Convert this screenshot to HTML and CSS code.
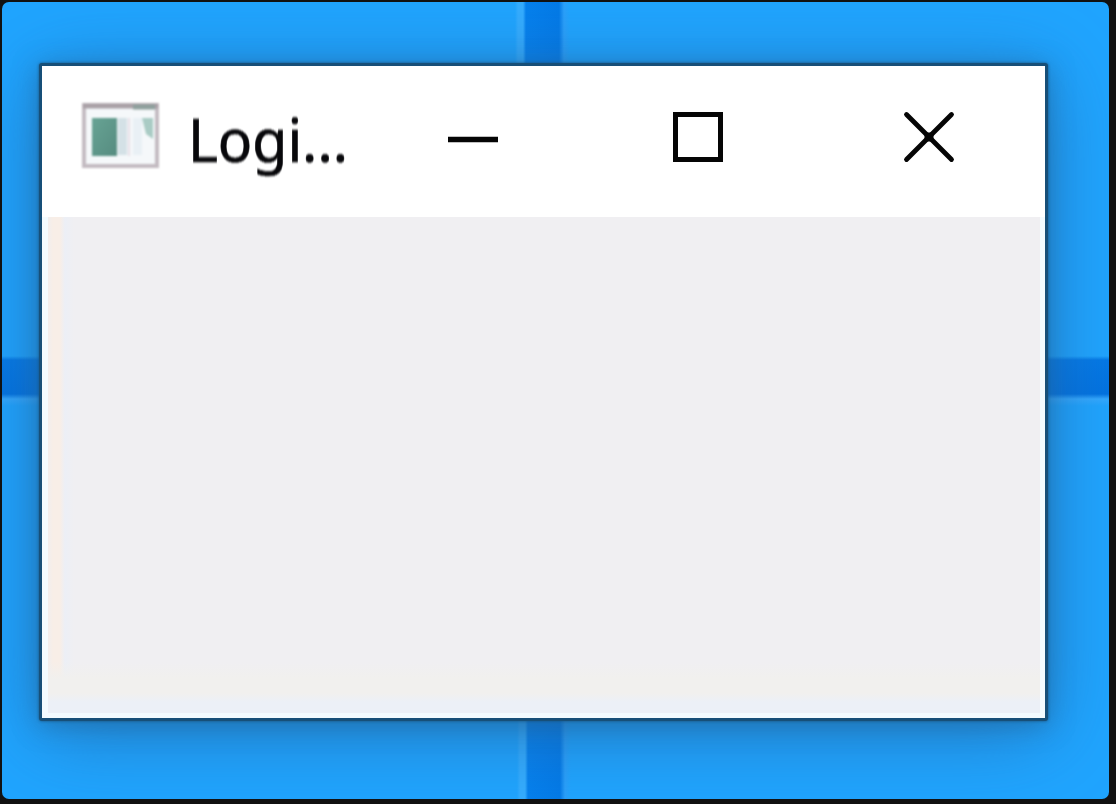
FILE: index.html
```html
<!DOCTYPE html>
<html lang="en">
<head>
<meta charset="utf-8">
<title>Login</title>
<link rel="stylesheet" href="styles.css">
</head>
<body>
<main class="desktop">
  <section class="window">
    <header class="titlebar">
      <svg class="app-icon" viewBox="0 0 80 70" aria-hidden="true">
        <defs>
          <linearGradient id="pane" x1="0" y1="0" x2="1" y2="1">
            <stop offset="0" stop-color="#67a394"/><stop offset="1" stop-color="#568c80"/>
          </linearGradient>
        </defs>
        <rect x="3" y="5" width="73" height="61" fill="#f5f8fa" stroke="#c3bbc1" stroke-width="4"/>
        <path d="M2 6H77" stroke="#aaa1a7" stroke-width="5"/>
        <path d="M52 7H74" stroke="#8fa09d" stroke-width="5"/>
        <rect x="11" y="18" width="25" height="38" fill="url(#pane)"/>
        <rect x="37" y="18" width="9" height="37" fill="#d4e1e6"/>
        <path d="M48 18V56" stroke="#e7dfe6" stroke-width="2"/>
        <rect x="52" y="18" width="9" height="37" fill="#e9f0f5"/>
        <path d="M61 18H72V39L65 34Z" fill="#a9cbc4"/>
      </svg>
      <span class="title">Logi...</span>
      <div class="controls">
        <svg class="control" viewBox="0 0 56 56" aria-label="Minimize"><path d="M3 30.500H53" stroke-width="5.500"/></svg>
        <svg class="control" viewBox="0 0 56 56" aria-label="Maximize"><rect x="5.500" y="5.500" width="45" height="45" stroke-width="5"/></svg>
        <svg class="control control-close" viewBox="0 0 56 56" aria-label="Close"><path d="M5.500 5.500L50.500 50.500M50.500 5.500L5.500 50.500" stroke-width="4.800" stroke-linecap="round"/><rect class="cross" x="23.500" y="23.500" width="9" height="9" rx="2"/></svg>
      </div>
    </header>
    <div class="content"></div>
  </section>
</main>
</body>
</html>
```
FILE: styles.css
```css
* { box-sizing: border-box; }
body {
  margin: 0;
  padding: 2px 7px 5px 2px;
  height: 804px;
  background: #111;
  overflow: hidden;
}
.desktop {
  height: 797px;
  padding: 61px 61px 78px 37px;
  border-radius: 7px;
  overflow: hidden;
  background:
    linear-gradient(90deg, transparent 513px, #35adff 516px, #35adff 521px, #0580ee 524px, #037ae8 557px, #2ba0fb 562px, transparent 568px) top / 100% 50% no-repeat,
    linear-gradient(90deg, transparent 515px, #35adff 518px, #35adff 523px, #0580ee 526px, #037ae8 558px, #2ba0fb 563px, transparent 569px) bottom / 100% 50% no-repeat,
    linear-gradient(transparent 354px, #0478e6 358px, #0272e1 392px, #35a9ff 397px, transparent 404px),
    #20a5ff;
}
.window {
  height: 658px;
  display: flex;
  flex-direction: column;
  border: 3px solid #174f78;
  border-radius: 3px;
  box-shadow: 0 0 3px #174f78, 0 4px 24px rgba(32, 95, 145, .5), 0 12px 80px rgba(36, 105, 170, .75);
  background: #fff;
}
.titlebar {
  height: 151px;
  flex: none;
  display: flex;
  align-items: flex-start;
  padding: 34px 87px 0 39px;
  background: #fff;
}
.app-icon {
  width: 80px;
  height: 70px;
  flex: none;
  filter: blur(1.2px);
}
.title {
  width: 190px;
  margin: -3px 0 0 27px;
  font: 60px/84px "Noto Sans", sans-serif;
  color: #08080b;
  white-space: nowrap;
  -webkit-text-stroke: .7px #08080b;
  transform: scaleX(.95);
  transform-origin: left;
  filter: blur(.8px);
}
.controls {
  flex: 1;
  display: flex;
  gap: 169px;
  margin: 9px 0 0 67px;
}
.control {
  width: 56px;
  height: 56px;
  flex: none;
  fill: none;
  stroke: #050505;
  filter: blur(.6px);
}
.control-close { margin-left: 6px; }
.cross { fill: #050505; stroke: none; }
.content {
  flex: 1;
  border: solid #f3fbff;
  border-width: 0 5px 5px 6px;
  background:
    linear-gradient(transparent 445px, #f1f0ee 462px, #f1f0ee 476px, #ecf0f7 485px),
    linear-gradient(90deg, #f1eeee 0, #f8eee7 5px 12px, #eceff6 17px, #f0eff2 26px);
  background-origin: padding-box;
  background-clip: padding-box;
}
```
